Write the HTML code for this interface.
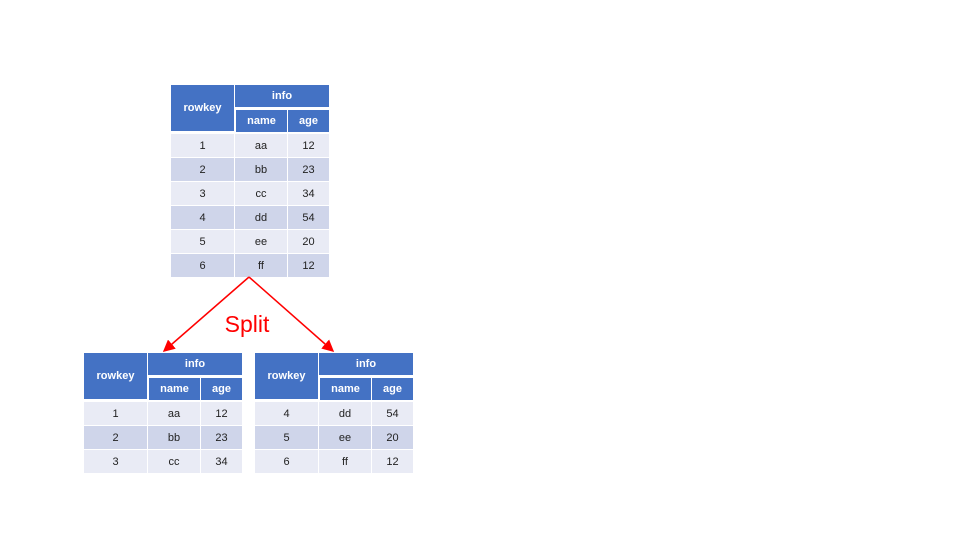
<!DOCTYPE html>
<html><head><meta charset="utf-8"><style>
body{margin:0;width:960px;height:540px;background:#fff;position:relative;overflow:hidden;font-family:"Liberation Sans","Noto Sans CJK SC",sans-serif}
.c{position:absolute;display:flex;align-items:center;justify-content:center;font-size:11px;color:#222}
.h{background:#4472C4;color:#fff;font-weight:bold}
.l{background:#E9EBF5}.d{background:#CFD5EA}
</style></head><body>
<div id="root"></div>
<svg width="960" height="540" style="position:absolute;left:0;top:0">
<defs><marker id="a" markerWidth="8" markerHeight="8" refX="7" refY="4" orient="auto"><path d="M0,0 L8,4 L0,8 z" fill="#f00"/></marker></defs>
<line x1="249" y1="277" x2="164" y2="351" stroke="#f00" stroke-width="1.5" marker-end="url(#a)"/>
<line x1="249" y1="277" x2="333" y2="351" stroke="#f00" stroke-width="1.5" marker-end="url(#a)"/>
<text x="247" y="332" fill="#f00" font-size="23" text-anchor="middle" font-family="Liberation Sans, sans-serif">Split</text>
</svg>
<script>
function cell(x,y,w,h,cls,t){var d=document.createElement('div');d.className='c '+cls;d.style.cssText='left:'+x+'px;top:'+y+'px;width:'+w+'px;height:'+h+'px';d.textContent=t;document.getElementById('root').appendChild(d);}
function table(x,y,rows){
 cell(x,y,63,46,'h','rowkey');
 cell(x+64,y,94,22,'h','info');
 cell(x+65,y+25,51,22,'h','name');
 cell(x+117,y+25,41,22,'h','age');
 var ry=y+49;
 rows.forEach(function(r,i){var c=i%2?'d':'l';
  cell(x,ry,63,23,c,r[0]);cell(x+64,ry,52,23,c,r[1]);cell(x+117,ry,41,23,c,r[2]);ry+=24;});
}
table(171,85,[["1","aa","12"],["2","bb","23"],["3","cc","34"],["4","dd","54"],["5","ee","20"],["6","ff","12"]]);
table(84,353,[["1","aa","12"],["2","bb","23"],["3","cc","34"]]);
table(255,353,[["4","dd","54"],["5","ee","20"],["6","ff","12"]]);
</script>
</body></html>
